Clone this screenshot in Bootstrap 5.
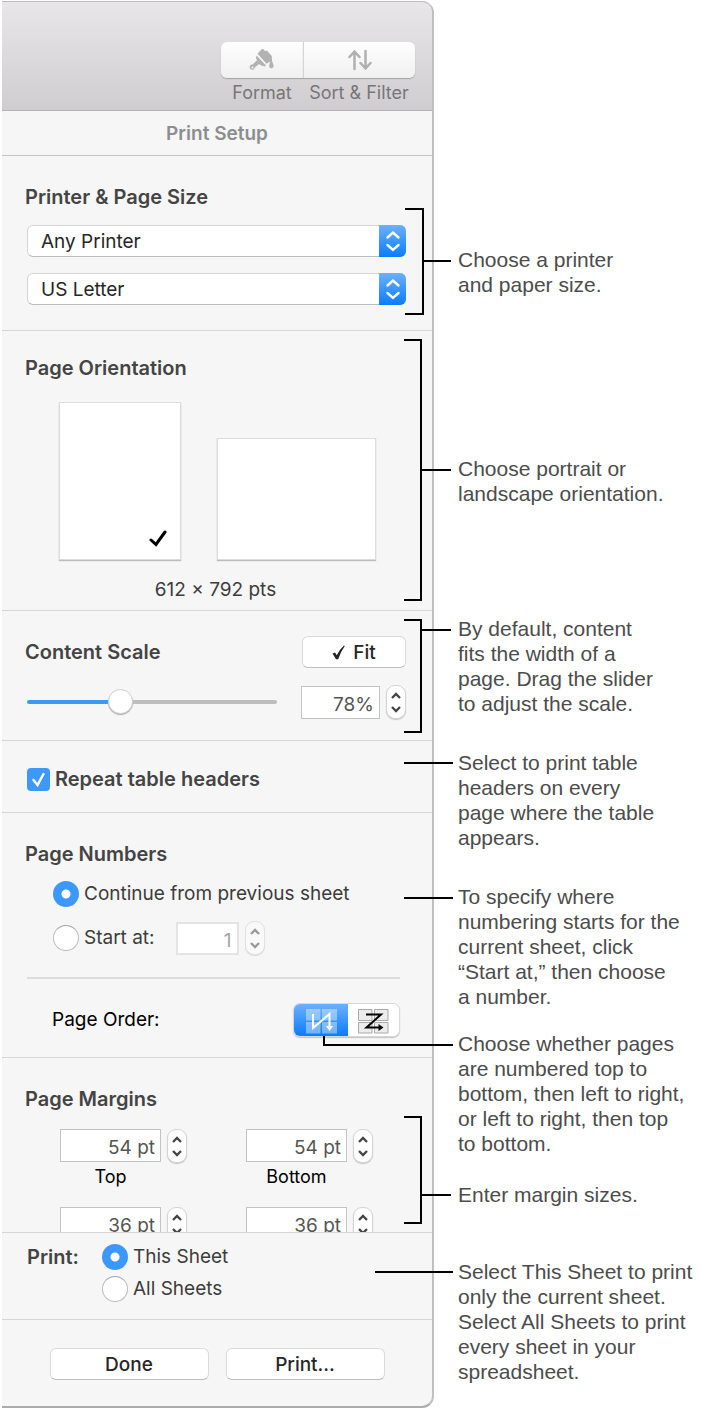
<!DOCTYPE html>
<html lang="en">
<head>
<meta charset="utf-8">
<meta name="viewport" content="width=device-width, initial-scale=1">
<title>Print Setup</title>
<link href="https://cdn.jsdelivr.net/npm/bootstrap@5.3.0/dist/css/bootstrap.min.css" rel="stylesheet">
<style>
  body { background: #fff; color: #3c3c3c; font: 400 19px/24px Inter, "Noto Sans", sans-serif; }
  .guide { padding: 1px 0 0 2px; }
  .panel { flex: 1 0 432px; border-right: 2px solid #bfbfbf; border-bottom: 2px solid #ababab; border-radius: 0 12px 12px 0; background: #f6f6f6; }
  .notes { flex: 1 0 268px; padding-top: 246px; padding-left: 24px; }

  /* toolbar */
  .toolbar { height: 110px; padding: 40px 17px 0 0; border-top: 1px solid #bcbcbc; border-bottom: 1px solid #b3b1b3; border-top-right-radius: 10px; background: linear-gradient(#e8e6e8, #d0cdd0); }
  .tool { padding: 0; border: 0; background: none; color: #787678; font-size: 18px; width: 112px; }
  .tool-narrow { width: 82px; }
  .tool-face { height: 36px; margin-bottom: 3px; border-radius: 0 6px 6px 0; background: linear-gradient(#fefefe, #f0f0f0); box-shadow: 0 1px 1px #a4a2a4; border-left: 1px solid #d6d4d6; }
  .tool-narrow .tool-face { border-radius: 6px 0 0 6px; border-left: 0; }
  .panel-title { padding: 11px 0 9px; height: 45px; border-bottom: 1px solid #c3c6c8; color: #8b8e90; font-size: 19px; font-weight: 600; line-height: 24px; }

  /* sections */
  .block { position: relative; padding: 25px 26px 21px 23px; border-bottom: 1px solid #d6d6d6; }
  .block-tall { padding-top: 29px; }
  .block-printer { padding-bottom: 25px; }
  .block-repeat { padding-top: 26px; }
  .block h2, .head-label { margin: 0; font-size: 20px; line-height: 24px; font-weight: 600; color: #444; }
  .inset { padding-left: 2px; }

  .pick { position: relative; }
  .pick select { width: 100%; height: 32px; padding: 2px 30px 0 13px; appearance: none; border: 1px solid #d4d4d4; border-bottom-color: #bdbdbd; border-radius: 6px; background: #fff; color: #262626; font-size: 19px; line-height: 24px; }
  .pick svg { position: absolute; top: 0; right: 0; pointer-events: none; }

  .sheet { border: 1px solid #dcdcdc; background: #fff; box-shadow: 0 1px 1px #bbb; padding: 0 13px 12px 0; }
  .sheet-portrait { width: 122px; height: 158px; }
  .sheet-landscape { width: 159px; height: 122px; }
  .sheets { gap: 36px; padding-left: 34px; margin-top: 22px; }
  .sheet-size { margin: 18px 0 0; text-align: center; }

  .push { height: 32px; padding: 1px 0 0; border: 1px solid #dadada; border-bottom-color: #bfbfbf; border-radius: 6px; background: #fff; color: #262626; font-size: 19px; line-height: 24px; font-weight: 500; }
  .push-fit { width: 104px; }
  .push-wide { width: 159px; }

  .scale-row { margin-top: 17px; }
  .scale { width: 250px; height: 26px; margin: 0; appearance: none; background: none; }
  .scale::-webkit-slider-runnable-track { height: 4px; border-radius: 2px; background: linear-gradient(90deg, #3d98fb 37%, #bebebe 37%); }
  .scale::-webkit-slider-thumb { appearance: none; width: 25px; height: 25px; margin-top: -11px; border: 1px solid #d2d2d2; border-radius: 50%; background: #fff; box-shadow: 0 1px 1px #aaa; }

  .amount { height: 33px; padding: 4px 5px 0 0; border: 1px solid #c3c3c3; border-radius: 0; background: #fff; color: #555; font-size: 19px; line-height: 24px; text-align: right; }
  .amount:disabled { border: 2px solid #e4e4e4; color: #a4a4a4; }
  .w-scale { width: 79px; } .w-start { width: 63px; margin-left: 21px; } .w-margin { width: 101px; }
  .stepper { width: 20px; height: 34px; margin-left: 6px; padding: 0; border: 1px solid #d4d4d4; border-radius: 9px; background: #fff; color: #444; box-shadow: 0 1px 1px #c8c8c8; }
  .stepper:disabled { background: #f9f9f9; color: #999; border-color: #e0e0e0; box-shadow: 0 1px 0 #ddd; }
  .stepper svg, .tool svg, .seg svg, .push svg { display: block; }

  .dot { appearance: none; flex: none; width: 26px; height: 26px; margin: 0 5px 0 0; border: 1px solid #bcbcbc; border-top-color: #a4a4a4; border-radius: 50%; background: #fff; }
  .dot:checked { border: 0; background: radial-gradient(circle, #fff 4px, #3d98fb 5px); }
  .tick { appearance: none; width: 23px; height: 23px; margin: 0; border-radius: 4px; background: #3d98fb; }
  .tick-wrap { position: relative; margin-right: 5px; }
  .tick-wrap svg { position: absolute; left: 0; top: 0; pointer-events: none; }

  .numbering { padding-left: 28px; margin-top: 15px; }
  .start-row { margin-top: 14px; }
  .rule { height: 2px; margin: 22px 6px 0 2px; border: 0; opacity: 1; background: #dcdcdc; }
  .seg { border-radius: 6px; background: #fff; box-shadow: 0 0 0 1px #d8d8d8, 0 1px 1px 1px #c4c4c4; overflow: hidden; }
  .seg button { width: 51px; height: 32px; padding: 2px 0 0 10px; border: 0; background: #fff; }
  .seg .seg-on { width: 54px; padding-left: 12px; background: linear-gradient(#6bb1fb, #0a7cff); }
  .order { padding: 25px 7px 0 27px; color: #000; }

  .margin-fields { height: 103px; overflow: hidden; padding-left: 35px; margin-top: 18px; column-gap: 59px; row-gap: 18px; }
  .margin-fields label { width: 101px; margin-top: 3px; text-align: center; font-size: 18px; line-height: 22px; color: #000; }

  .block-print { padding-top: 11px; padding-bottom: 17px; }
  .print-grid { display: grid; grid-template-columns: 75px 1fr; row-gap: 6px; align-items: center; }
  .print-grid .all-sheets { grid-column: 2; }
  .footer-bar { gap: 17px; padding: 28px 0 26px; }

  /* callout lines drawn over the panel edge */
  .tie { position: absolute; right: 10px; width: 18px; border: 2px solid #000; border-left: 0; pointer-events: none; }
  .tie::after { content: ""; position: absolute; left: 100%; top: var(--lead); width: 31px; height: 2px; background: #000; }
  .tie-printer { top: 52px; height: 107px; right: 8px; --lead: 50px; width: 19px; }
  .tie-printer::after { width: 29px; }
  .tie-orient { top: 8px; height: 262px; --lead: 128px; }
  .tie-scale { top: 8px; height: 114px; --lead: 8px; }
  .tie-margins { top: 58px; height: 108px; --lead: 76px; }
  .line { position: absolute; right: -21px; width: 49px; height: 2px; background: #000; pointer-events: none; }
  .line-repeat { top: 21px; }
  .line-numbers { top: 84px; }
  .line-print { top: 38px; width: 78px; }
  .elbow { position: absolute; right: -21px; top: 223px; width: 130px; height: 10px; border: solid #000; border-width: 0 0 2px 2px; pointer-events: none; }

  .note { margin: 0; font: 21px/25px "Liberation Sans", Arial, sans-serif; color: #4c4c4c; white-space: nowrap; }
  .note-orient { margin-top: 159px; }
  .note-scale { margin-top: 110px; }
  .note-repeat, .note-numbers { margin-top: 34px; }
  .note-order { margin-top: 22px; }
  .note-margins { margin-top: 26px; }
  .note-print { margin-top: 52px; }
</style>
</head>
<body>
<svg class="position-absolute" width="0" height="0" aria-hidden="true">
  <defs>
    <linearGradient id="blue" x1="0" y1="0" x2="0" y2="1"><stop offset="0" stop-color="#6bb1fb"/><stop offset="1" stop-color="#0a7cff"/></linearGradient>
  </defs>
  <symbol id="steps" viewBox="0 0 18 32"><path d="M5 12l4-4 4 4M5 21l4 4 4-4" fill="none" stroke="currentColor" stroke-width="2.3"/></symbol>
  <symbol id="pickcap" viewBox="0 0 27 32"><path d="M0 0h21a6 6 0 0 1 6 6v20a6 6 0 0 1-6 6H0z" fill="url(#blue)"/><path d="M8.500 12.500l5.500-5 5.500 5M8.500 20l5.500 5 5.500-5" fill="none" stroke="#fff" stroke-width="2.400" stroke-linecap="round"/></symbol>
</svg>

<main class="guide d-flex align-items-start">
  <form class="panel" aria-label="Print Setup">
    <div class="toolbar d-flex justify-content-end align-items-start">
      <button type="button" class="tool tool-narrow"><span class="tool-face d-flex align-items-center justify-content-center">
        <svg width="26" height="26" viewBox="0 0 26 26"><path d="M8.500 6.800L13 1.800l2.200 1 .9 1.400 1.700-.7 5 5.600.2 5 1.600 4.100a2.300 2.300 0 1 1-4.300-.2l.9-3.500-3.700 2.300z" fill="#b2b2b2"/><path d="M7.500 8.500L17 18.600l-1.300.9-4.100-1.300-1.500-1.300-4.300 3.600a2.600 2.600 0 1 1-2.300-3l4.700-4.400-1.300-1.500z" fill="#b2b2b2"/><circle cx="3.500" cy="20.500" r="1" fill="#f6f6f6"/></svg></span>Format</button>
      <button type="button" class="tool"><span class="tool-face d-flex align-items-center justify-content-center">
        <svg width="24" height="22" viewBox="0 0 24 22"><path d="M6.500 20V3M1.500 8l5-5.500 5 5.500M17.500 2v17M12.500 14l5 5.500 5-5.500" fill="none" stroke="#b0b0b0" stroke-width="2.500" stroke-linecap="round"/></svg></span>Sort &amp; Filter</button>
    </div>
    <h1 class="panel-title m-0 text-center">Print Setup</h1>

    <section class="block block-tall block-printer">
      <h2>Printer &amp; Page Size</h2>
      <div class="inset d-grid gap-3 mt-3">
        <div class="pick d-flex"><select aria-label="Printer"><option>Any Printer</option></select><svg width="27" height="32"><use href="#pickcap"/></svg></div>
        <div class="pick d-flex"><select aria-label="Paper size"><option>US Letter</option></select><svg width="27" height="32"><use href="#pickcap"/></svg></div>
      </div>
      <span class="tie tie-printer"></span>
    </section>

    <section class="block pb-2">
      <h2>Page Orientation</h2>
      <div class="sheets d-flex align-items-end">
        <button type="button" class="sheet sheet-portrait d-flex align-items-end justify-content-end" aria-label="Portrait" aria-pressed="true">
          <svg width="18" height="17" viewBox="0 0 18 17"><path d="M2 10l5 4.500L16 2" fill="none" stroke="#000" stroke-width="3" stroke-linecap="round"/></svg></button>
        <button type="button" class="sheet sheet-landscape" aria-label="Landscape" aria-pressed="false"></button>
      </div>
      <p class="sheet-size">612 × 792 pts</p>
      <span class="tie tie-orient"></span>
    </section>

    <section class="block">
      <div class="d-flex align-items-center justify-content-between">
        <h2>Content Scale</h2>
        <button type="button" class="push push-fit d-flex align-items-center justify-content-center gap-2"><svg width="13" height="15" viewBox="0 0 13 15"><path d="M.5 8.500l2.500-1 1.800 2.800Q7.500 4.500 12 .5l.8.600Q8.800 6.500 6.200 14.200H4z" fill="#222"/></svg>Fit</button>
      </div>
      <div class="scale-row inset d-flex align-items-center">
        <input type="range" class="scale me-auto" min="0" max="100" value="36" aria-label="Content scale">
        <input type="text" class="amount w-scale" value="78%" aria-label="Scale percent">
        <button type="button" class="stepper" aria-label="Change scale"><svg width="18" height="32"><use href="#steps"/></svg></button>
      </div>
      <span class="tie tie-scale"></span>
    </section>

    <section class="block block-repeat">
      <div class="inset d-flex align-items-center">
        <span class="tick-wrap d-flex"><input type="checkbox" class="tick" id="repeat" checked><svg width="23" height="23" viewBox="0 0 23 23"><path d="M6.500 12l4 5L16.500 6" fill="none" stroke="#fff" stroke-width="2.500" stroke-linecap="round"/></svg></span>
        <label class="head-label" for="repeat">Repeat table headers</label>
      </div>
      <span class="line line-repeat"></span>
    </section>

    <section class="block block-tall">
      <h2>Page Numbers</h2>
      <div class="numbering">
        <div class="d-flex align-items-center"><input class="dot" type="radio" name="start" id="cont" checked><label for="cont">Continue from previous sheet</label></div>
        <div class="start-row d-flex align-items-center"><input class="dot" type="radio" name="start" id="at"><label for="at">Start at:</label>
          <input type="text" class="amount w-start" value="1" aria-label="First page number" disabled>
          <button type="button" class="stepper" aria-label="Change first page number" disabled><svg width="18" height="32"><use href="#steps"/></svg></button></div>
      </div>
      <hr class="rule">
      <div class="order d-flex align-items-center justify-content-between">
        <span>Page Order:</span>
        <div class="seg d-flex" role="group" aria-label="Page order">
          <button type="button" class="seg-on" aria-label="Top to bottom" aria-pressed="true"><svg width="32" height="25" viewBox="0 0 32 25"><path d="M0 0h14.500v11.500H0zM16 0h15v11.500H16zM0 13h14.500v11.500H0zM16 13h15v11.500H16z" fill="#fff" opacity=".4"/><path d="M7 5v14L23.500 5v14" fill="none" stroke="#fff" stroke-width="2"/><path d="M20 17h7l-3.500 5z" fill="#fff"/></svg></button>
          <button type="button" aria-label="Left to right" aria-pressed="false"><svg width="32" height="25" viewBox="0 0 32 25"><path d="M.5.500h13.500v11H.5zM16.500.500H30v11H16.500zM.5 13.500h13.500v10.500H.5zM16.500 13.500H30v10.500H16.500z" fill="#ececec" stroke="#a9a9a9"/><path d="M8 5.500h15L8.500 18.500h13" fill="none" stroke="#000" stroke-width="2"/><path d="M20.500 15l5 3.500-5 3.500z"/></svg></button>
        </div>
      </div>
      <span class="line line-numbers"></span>
      <span class="elbow"></span>
    </section>

    <section class="block block-tall pb-0">
      <h2>Page Margins</h2>
      <div class="margin-fields d-flex flex-wrap align-content-start">
        <div><div class="d-flex"><input type="text" class="amount w-margin" id="mt" value="54 pt"><button type="button" class="stepper" aria-label="Change top margin"><svg width="18" height="32"><use href="#steps"/></svg></button></div><label for="mt">Top</label></div>
        <div><div class="d-flex"><input type="text" class="amount w-margin" id="mb" value="54 pt"><button type="button" class="stepper" aria-label="Change bottom margin"><svg width="18" height="32"><use href="#steps"/></svg></button></div><label for="mb">Bottom</label></div>
        <div class="d-flex"><input type="text" class="amount w-margin" value="36 pt" aria-label="Left margin"><button type="button" class="stepper" aria-label="Change left margin"><svg width="18" height="32"><use href="#steps"/></svg></button></div>
        <div class="d-flex"><input type="text" class="amount w-margin" value="36 pt" aria-label="Right margin"><button type="button" class="stepper" aria-label="Change right margin"><svg width="18" height="32"><use href="#steps"/></svg></button></div>
      </div>
      <span class="tie tie-margins"></span>
    </section>

    <section class="block block-print">
      <div class="inset print-grid" role="radiogroup" aria-labelledby="print-what">
        <span class="head-label" id="print-what">Print:</span>
        <div class="d-flex align-items-center"><input class="dot" type="radio" name="what" id="this" checked><label for="this">This Sheet</label></div>
        <div class="all-sheets d-flex align-items-center"><input class="dot" type="radio" name="what" id="all"><label for="all">All Sheets</label></div>
      </div>
      <span class="line line-print"></span>
    </section>

    <div class="footer-bar d-flex justify-content-center">
      <button type="button" class="push push-wide">Done</button>
      <button type="button" class="push push-wide">Print...</button>
    </div>
  </form>

  <aside class="notes">
    <p class="note">Choose a printer<br>and paper size.</p>
    <p class="note note-orient">Choose portrait or<br>landscape orientation.</p>
    <p class="note note-scale">By default, content<br>fits the width of a<br>page. Drag the slider<br>to adjust the scale.</p>
    <p class="note note-repeat">Select to print table<br>headers on every<br>page where the table<br>appears.</p>
    <p class="note note-numbers">To specify where<br>numbering starts for the<br>current sheet, click<br>“Start at,” then choose<br>a number.</p>
    <p class="note note-order">Choose whether pages<br>are numbered top to<br>bottom, then left to right,<br>or left to right, then top<br>to bottom.</p>
    <p class="note note-margins">Enter margin sizes.</p>
    <p class="note note-print">Select This Sheet to print<br>only the current sheet.<br>Select All Sheets to print<br>every sheet in your<br>spreadsheet.</p>
  </aside>
</main>
<script src="https://cdn.jsdelivr.net/npm/bootstrap@5.3.0/dist/js/bootstrap.bundle.min.js"></script>
</body>
</html>
